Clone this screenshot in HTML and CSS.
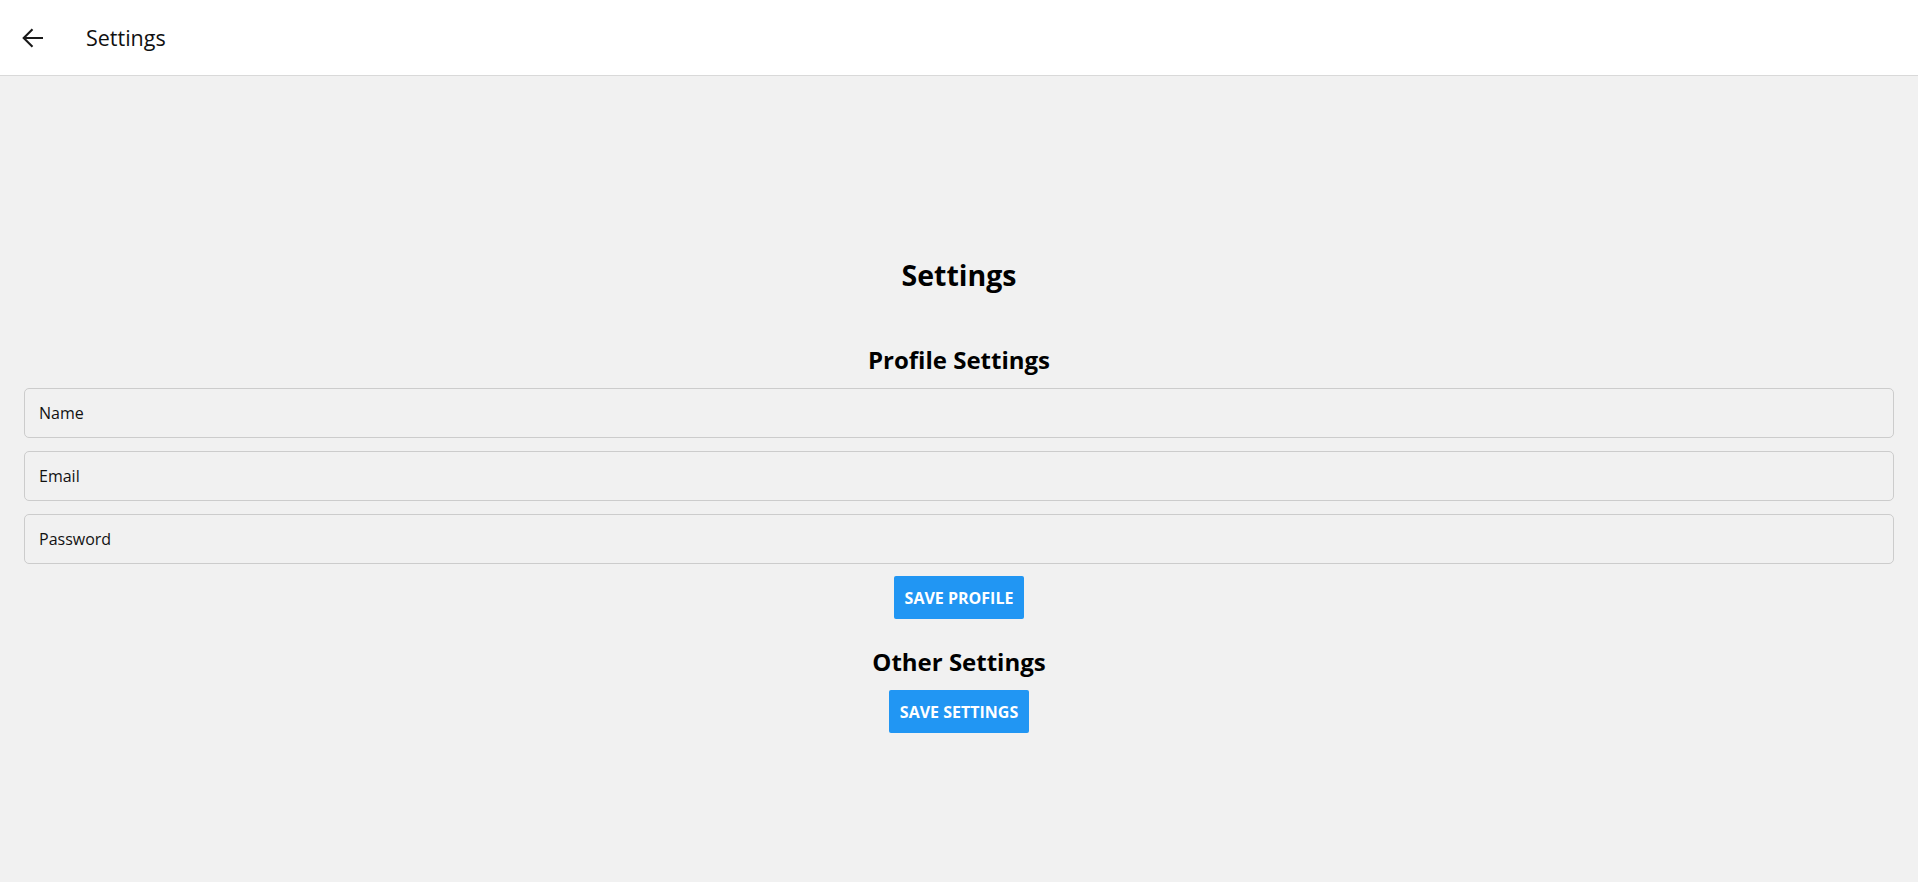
FILE: index.html
```html
<!DOCTYPE html>
<html lang="en">
<head>
<meta charset="utf-8">
<title>Settings</title>
<link rel="stylesheet" href="styles.css">
</head>
<body>
<header class="topbar">
  <button class="back" aria-label="Back">
    <svg viewBox="0 0 22 22" width="22" height="22"><path d="M21 11H2M10.5 2.2L1.7 11l8.8 8.8"/></svg>
  </button>
  <div class="topbar-title">Settings</div>
</header>
<main class="page">
  <h1 class="page-title">Settings</h1>
  <section class="section">
    <h2 class="section-title">Profile Settings</h2>
    <div class="fields">
      <div class="field">Name</div>
      <div class="field">Email</div>
      <div class="field">Password</div>
    </div>
    <button class="btn">Save Profile</button>
  </section>
  <section class="section">
    <h2 class="section-title other">Other Settings</h2>
    <button class="btn">Save Settings</button>
  </section>
</main>
</body>
</html>
```
FILE: styles.css
```css
* { box-sizing: border-box; }
html, body { margin: 0; height: 100%; }
body {
  font-family: "Open Sans", "Noto Sans", sans-serif;
  background: #f1f1f1;
  color: #000;
}
.topbar {
  height: 76px;
  background: #fff;
  border-bottom: 1px solid #d9d9d9;
  display: flex;
  align-items: center;
  padding-left: 22px;
}
.back {
  border: 0;
  background: none;
  padding: 0;
  width: 22px;
  height: 22px;
  display: flex;
  margin-top: 1px;
}
.back svg {
  fill: none;
  stroke: #1a1a1a;
  stroke-width: 2.1;
}
.topbar-title {
  margin-left: 42px;
  font-size: 21.5px;
  color: #111;
  margin-top: -1px;
}
.page {
  padding: 0 24px;
  display: flex;
  flex-direction: column;
  align-items: center;
}
.page-title {
  margin: 179px 0 0;
  font-size: 28.5px;
  line-height: 40px;
  font-weight: 700;
}
.section {
  width: 100%;
  display: flex;
  flex-direction: column;
  align-items: center;
}
.section-title {
  margin: 49px 0 0;
  font-size: 24px;
  line-height: 32px;
  font-weight: 700;
}
.section-title.other { margin-top: 27px; }
.fields {
  width: 100%;
  display: flex;
  flex-direction: column;
  gap: 13px;
  margin-top: 12px;
}
.field {
  height: 50px;
  border: 1px solid #cccccc;
  border-radius: 5px;
  padding: 0 14px;
  display: flex;
  align-items: center;
  font-size: 16px;
  color: #111;
}
.btn {
  margin-top: 12px;
  border: 0;
  border-radius: 2px;
  background: #2196f3;
  color: #fff;
  font-family: inherit;
  font-weight: 700;
  font-size: 16px;
  text-transform: uppercase;
  height: 43px;
  padding: 0 11px;
}
```
